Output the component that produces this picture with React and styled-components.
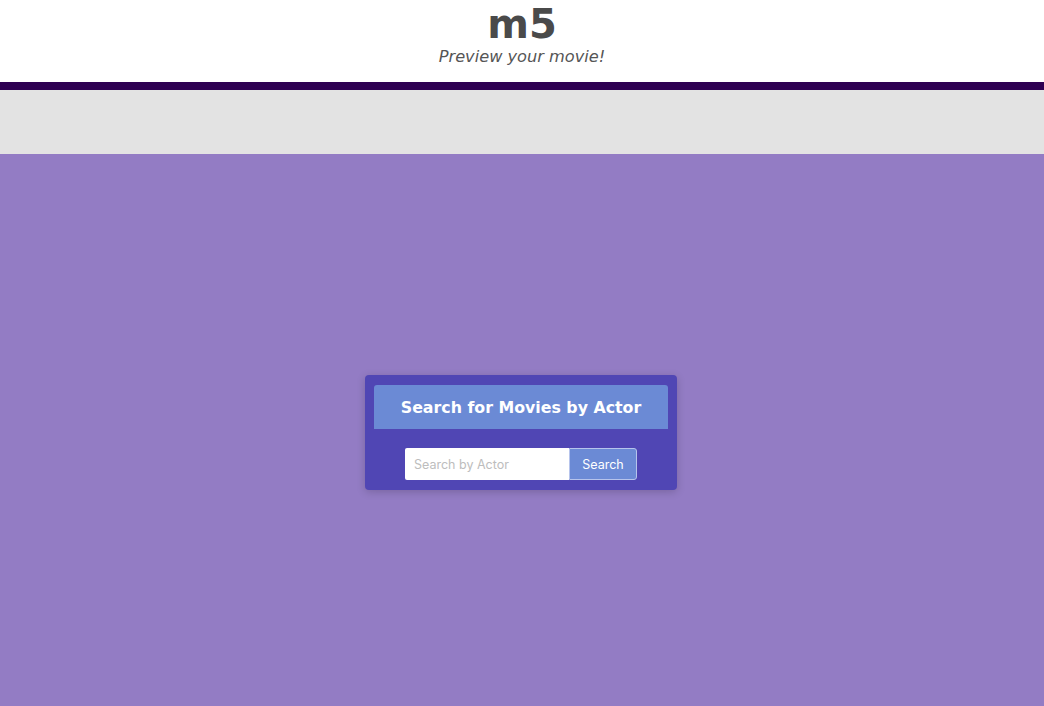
import React from "react";
import styled, { createGlobalStyle } from "styled-components";

const GlobalStyle = createGlobalStyle`
  html, body {
    margin: 0;
    padding: 0;
    height: 100%;
  }
  body {
    font-family: "DejaVu Sans", sans-serif;
    background: #937cc4;
  }
  #root {
    min-height: 100vh;
    display: flex;
    flex-direction: column;
  }
`;

const Header = styled.header`
  background: #ffffff;
  text-align: center;
  height: 82px;
  border-bottom: 8px solid #2e0052;
  box-sizing: content-box;
`;

const Title = styled.h1`
  margin: 0;
  padding-top: 3px;
  font-size: 40px;
  line-height: 42px;
  font-weight: 700;
  color: #4a4a4a;
`;

const Subtitle = styled.p`
  margin: 2px 0 0;
  font-size: 16.2px;
  font-style: italic;
  color: #555;
`;

const NavBar = styled.div`
  height: 64px;
  background: #e3e3e3;
`;

const Main = styled.main`
  flex: 1;
  display: flex;
  justify-content: center;
  padding-top: 221px;
  padding-right: 2px;
`;

const Card = styled.div`
  width: 312px;
  height: 115px;
  box-sizing: border-box;
  padding: 10px 9px;
  background: #5046b4;
  border-radius: 4px;
  box-shadow: 0 2px 8px rgba(0, 0, 0, 0.18);
`;

const CardTitle = styled.h2`
  margin: 0;
  height: 44px;
  display: flex;
  align-items: center;
  justify-content: center;
  background: #6b8ad5;
  border-radius: 3px 3px 0 0;
  color: #fff;
  font-size: 15.8px;
  font-weight: 700;
`;

const SearchRow = styled.form`
  display: flex;
  justify-content: center;
  margin-top: 19px;
`;

const Input = styled.input`
  width: 164px;
  height: 32px;
  box-sizing: border-box;
  border: none;
  border-radius: 2px 0 0 2px;
  padding: 0 9px;
  font-family: Inter, "Noto Sans", sans-serif;
  font-size: 12.5px;
  outline: none;
  &::placeholder {
    color: #bdbdbd;
  }
`;

const Button = styled.button`
  width: 68px;
  height: 32px;
  box-sizing: border-box;
  background: #6b8ad5;
  color: #fff;
  border: 1px solid #b6c4ec;
  border-radius: 0 3px 3px 0;
  font-family: Inter, "Noto Sans", sans-serif;
  font-size: 12.5px;
  cursor: pointer;
`;

export default function App() {
  return (
    <>
      <GlobalStyle />
      <Header>
        <Title>m5</Title>
        <Subtitle>Preview your movie!</Subtitle>
      </Header>
      <NavBar />
      <Main>
        <Card>
          <CardTitle>Search for Movies by Actor</CardTitle>
          <SearchRow onSubmit={(e) => e.preventDefault()}>
            <Input placeholder="Search by Actor" />
            <Button type="submit">Search</Button>
          </SearchRow>
        </Card>
      </Main>
    </>
  );
}
